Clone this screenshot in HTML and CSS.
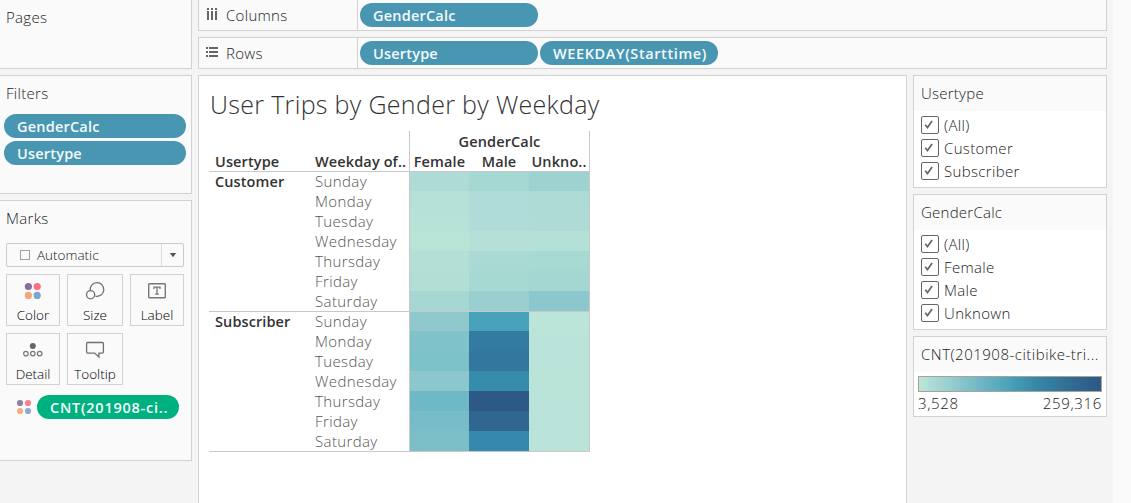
FILE: index.html
```
<!DOCTYPE html>
<html lang="en">
<head>
<meta charset="utf-8">
<title>User Trips by Gender by Weekday</title>
<link rel="stylesheet" href="styles.css">
</head>
<body>
<div class="app">
  <aside class="side">
    <section class="panel pages"><h2>Pages</h2></section>
    <section class="panel filters"><h2>Filters</h2>
      <div class="pill">GenderCalc</div>
      <div class="pill">Usertype</div>
    </section>
    <section class="panel marks"><h2>Marks</h2>
      <div class="select"><i class="square"></i><span class="t-auto">Automatic</span><b><svg width="8" height="5"><path d="M.8 0h6.4L4 4.2z" fill="#555"/></svg></b></div>
      <div class="buttons">
        <div class="btn"><svg width="20" height="20" viewBox="0 0 20 20"><circle cx="5.4" cy="5.5" r="3.6" fill="#84709b"/><circle cx="14.2" cy="5.5" r="3.6" fill="#fc7082"/><circle cx="5.4" cy="14.4" r="3.6" fill="#f4a67a"/><circle cx="14.2" cy="14.4" r="3.6" fill="#7fa5cd"/></svg><span>Color</span></div>
        <div class="btn"><svg width="20" height="20" viewBox="0 0 20 20" fill="none" stroke="#717171" stroke-width="1.3"><path d="M5.3 9.6a6.8 6.8 0 1 1 5.1 5.5"/><circle cx="5.6" cy="13.7" r="4.1"/></svg><span>Size</span></div>
        <div class="btn"><svg width="20" height="20" viewBox="0 0 20 20" fill="none" stroke="#777"><rect x="1.7" y="2.7" width="16.6" height="14" rx=".8" stroke-width="1.4"/><path d="M7 7.9V6.2h6v1.7M10 6.2v7M8.2 13.2h3.6" stroke-width="1.3"/></svg><span>Label</span></div>
        <div class="btn"><svg width="20" height="20" viewBox="0 0 20 20" fill="none" stroke="#777" stroke-width="1.2"><circle cx="9.8" cy="6" r="3" fill="#666" stroke="none"/><circle cx="2.9" cy="13.6" r="2.3"/><circle cx="9.8" cy="13.6" r="2.3"/><circle cx="16.7" cy="13.6" r="2.3"/></svg><span>Detail</span></div>
        <div class="btn"><svg width="20" height="20" viewBox="0 0 20 20" fill="none" stroke="#717171" stroke-width="1.3"><path d="M2.6 2.5h14.8q1 0 1 1v8.6q0 1-1 1h-3.5v3.9l-4.2-3.9H2.6q-1 0-1-1V3.5q0-1 1-1z"/></svg><span>Tooltip</span></div>
      </div>
      <div class="encoding"><svg width="16" height="16" viewBox="0 0 16 16"><circle cx="4" cy="4" r="3.1" fill="#917ea3"/><circle cx="12" cy="4" r="3.1" fill="#f9808f"/><circle cx="4" cy="12" r="3.1" fill="#f5ae85"/><circle cx="12" cy="12" r="3.1" fill="#8cabd0"/></svg><div class="pill measure">CNT(201908-ci..</div></div>
    </section>
  </aside>

  <main class="main">
    <div class="shelf columns"><div class="shelf-name"><svg width="12" height="12" fill="#666"><path d="M1 0h2v2H1zM5 0h2v2H5zM9 0h2v2H9zM1 3h2v9H1zM5 3h2v9H5zM9 3h2v9H9z"/></svg>Columns</div><div class="pill">GenderCalc</div></div>
    <div class="shelf rows"><div class="shelf-name"><svg width="12" height="12" fill="#666"><path d="M0 1h2v2H0zM0 5h2v2H0zM0 9h2v2H0zM3 1h9v2H3zM3 5h9v2H3zM3 9h9v2H3z"/></svg>Rows</div><div class="pill">Usertype</div><div class="pill weekday">WEEKDAY(Starttime)</div></div>
    <div class="work">
      <section class="viz">
        <h1>User Trips by Gender by Weekday</h1>
        <div class="table">
          <div class="head">
            <div class="h-user">Usertype</div><div class="h-day">Weekday of..</div>
            <div class="h-gender"><div class="h-title">GenderCalc</div><div>Female</div><div>Male</div><div>Unkno..</div></div>
          </div>
          <div class="group">
            <div class="name">Customer</div>
            <div class="days"><div>Sunday</div><div>Monday</div><div>Tuesday</div><div>Wednesday</div><div>Thursday</div><div>Friday</div><div>Saturday</div></div>
            <div class="heat">
              <i style="background:#afdbd6"></i><i style="background:#a5d8d3"></i><i style="background:#9cd3d0"></i>
              <i style="background:#b5e1d7"></i><i style="background:#afdcd8"></i><i style="background:#acdad5"></i>
              <i style="background:#b6e2d7"></i><i style="background:#afdcd8"></i><i style="background:#aedbd6"></i>
              <i style="background:#b8e4d7"></i><i style="background:#b4e0d7"></i><i style="background:#b4e0d7"></i>
              <i style="background:#b3dfd6"></i><i style="background:#abd9d4"></i><i style="background:#a8dad4"></i>
              <i style="background:#b2ded5"></i><i style="background:#a7d9d3"></i><i style="background:#a4d7d2"></i>
              <i style="background:#a5d8d3"></i><i style="background:#99d0cf"></i><i style="background:#8bc7cc"></i>
            </div>
          </div>
          <div class="group">
            <div class="name">Subscriber</div>
            <div class="days"><div>Sunday</div><div>Monday</div><div>Tuesday</div><div>Wednesday</div><div>Thursday</div><div>Friday</div><div>Saturday</div></div>
            <div class="heat">
              <i style="background:#8fc9cd"></i><i style="background:#47a2ba"></i><i style="background:#bce5da"></i>
              <i style="background:#80c2ca"></i><i style="background:#347ba1"></i><i style="background:#bae4d9"></i>
              <i style="background:#7ec2c9"></i><i style="background:#33779e"></i><i style="background:#bae4d9"></i>
              <i style="background:#8cc7ce"></i><i style="background:#378bab"></i><i style="background:#bbe4d9"></i>
              <i style="background:#6fb8c6"></i><i style="background:#2c5985"></i><i style="background:#b9e3d8"></i>
              <i style="background:#77bcc6"></i><i style="background:#306790"></i><i style="background:#b9e3d8"></i>
              <i style="background:#7cbfc9"></i><i style="background:#3688ae"></i><i style="background:#bae4d9"></i>
            </div>
          </div>
        </div>
      </section>
      <aside class="cards">
        <section class="card user"><h3>Usertype</h3>
          <label><svg class="check" viewBox="0 0 16 16"><path d="M3.2 7.7l2.3 2.8 4.6-6.4"/></svg><span>(All)</span></label>
          <label><svg class="check" viewBox="0 0 16 16"><path d="M3.2 7.7l2.3 2.8 4.6-6.4"/></svg><span>Customer</span></label>
          <label><svg class="check" viewBox="0 0 16 16"><path d="M3.2 7.7l2.3 2.8 4.6-6.4"/></svg><span>Subscriber</span></label>
        </section>
        <section class="card gender"><h3>GenderCalc</h3>
          <label><svg class="check" viewBox="0 0 16 16"><path d="M3.2 7.7l2.3 2.8 4.6-6.4"/></svg><span>(All)</span></label>
          <label><svg class="check" viewBox="0 0 16 16"><path d="M3.2 7.7l2.3 2.8 4.6-6.4"/></svg><span>Female</span></label>
          <label><svg class="check" viewBox="0 0 16 16"><path d="M3.2 7.7l2.3 2.8 4.6-6.4"/></svg><span>Male</span></label>
          <label><svg class="check" viewBox="0 0 16 16"><path d="M3.2 7.7l2.3 2.8 4.6-6.4"/></svg><span>Unknown</span></label>
        </section>
        <section class="card legend"><h3>CNT(201908-citibike-tri...</h3>
          <div class="ramp"></div>
          <div class="range"><span>3,528</span><span>259,316</span></div>
        </section>
      </aside>
    </div>
  </main>
  <div class="gutter"></div>
</div>
</body>
</html>
```
FILE: styles.css
```
* { box-sizing: border-box; }
body { margin: 0; font: 300 15px/20px "Open Sans", "Noto Sans", sans-serif; color: #222; overflow: hidden; }
h1, h2, h3 { margin: 0; font-weight: 300; font-size: 15px; line-height: 20px; }
h2 { letter-spacing: .3px; }
i { display: block; }
.app { display: flex; width: 1131px; height: 503px; background: #f4f4f4; overflow: hidden; }

.side { width: 192px; display: flex; flex-direction: column; gap: 6px; flex: none; }
.panel { background: #fafafa; border: 1px solid #d2d2d2; border-left: 0; padding-left: 6px; }
.pages { height: 69px; border-top: 0; padding-top: 7px; }
.filters { height: 119px; padding-top: 7px; }
.marks { height: 261px; padding-top: 7px; }

.pill { height: 24px; width: 178px; border-radius: 12px; background: #4996b2; color: #f4fafc; font-weight: 600; font-size: 14.5px; line-height: 25px; letter-spacing: .2px; padding-left: 13px; white-space: nowrap; flex: none; }
.filters .pill { width: 182px; margin: 0 0 3px -2px; }
.filters h2 { margin-bottom: 11px; }
.shelf .weekday { letter-spacing: .6px; }

.select { width: 178px; height: 24px; margin-top: 15px; border: 1px solid #cacaca; border-radius: 2px; display: flex; align-items: center; padding-left: 13px; font-size: 13.5px; }
.square { width: 10px; height: 10px; border: 1px solid #a0a0a0; margin-right: 7px; }
.select b { margin-left: auto; width: 22px; height: 22px; border-left: 1px solid #ddd; display: flex; align-items: center; justify-content: center; }
.buttons { display: grid; grid-template-columns: 54px 56px 54px; grid-auto-rows: 52px; gap: 7px; margin-top: 7px; }
.btn { border: 1px solid #d2d2d2; display: flex; flex-direction: column; align-items: center; padding-top: 6px; font-size: 13.5px; line-height: 18px; color: #000; }
.btn span { margin-top: 5px; }
.encoding { display: flex; align-items: center; gap: 5px; padding-left: 10px; margin-top: 10px; }
.measure { width: 142px; background: #00b180; letter-spacing: .75px; line-height: 26px; }

.main { width: 909px; margin-left: 6px; flex: none; }
.shelf { border: 1px solid #d2d2d2; background: #fafafa; display: flex; gap: 2px; }
.columns { height: 31px; border-top: 0; padding-top: 3px; }
.rows { height: 32px; margin-top: 6px; padding-top: 3px; }
.shelf-name { width: 159px; border-right: 1px solid #d2d2d2; display: flex; align-items: center; gap: 8px; padding-left: 7px; margin-top: -3px; letter-spacing: .3px; flex: none; }
.shelf-name svg { margin-top: -2px; }
.work { display: flex; gap: 6px; margin-top: 6px; }

.viz { width: 709px; height: 440px; background: #fff; border: 1px solid #d2d2d2; padding: 10px 0 0 10px; flex: none; }
h1 { font-size: 25px; line-height: 36px; padding-left: 1px; letter-spacing: .32px; white-space: nowrap; color: #333; }
.table { width: 381px; margin-top: 9px; border-bottom: 1px solid #c8c8c8; }
.head { display: flex; height: 40px; font-weight: 600; font-size: 14.5px; color: #333; white-space: nowrap; letter-spacing: .12px; }
.h-user, .h-day { width: 100px; padding: 21px 0 0 6px; }
.h-gender { width: 181px; padding-top: 1px; border: solid #c8c8c8; border-width: 0 1px; display: grid; grid-template-columns: 59px 60px 60px; grid-template-rows: 20px 19px; text-align: center; }
.h-title { grid-column: 1 / 4; }
.group { height: 140px; border-top: 1px solid #c8c8c8; display: grid; grid-template-columns: 100px 100px 181px; }
.name { font-weight: 600; font-size: 14.5px; padding-left: 6px; color: #333; letter-spacing: .1px; }
.days { padding-left: 6px; margin-top: -1px; color: #555; letter-spacing: .38px; }
.heat { border: solid #c8c8c8; border-width: 0 1px; display: grid; grid-template-columns: 59px 60px 60px; grid-template-rows: 19px repeat(6, 20px); }

.cards { width: 194px; display: flex; flex-direction: column; gap: 6px; }
.card { background: #fff; border: 1px solid #d2d2d2; white-space: nowrap; }
.card h3 { height: 35px; padding: 7px 0 0 7px; background: #fafafa; margin-bottom: 3px; letter-spacing: .25px; }
.user { height: 113px; }
.gender { height: 136px; }
.legend { height: 81px; }
.card.legend h3 { letter-spacing: .5px; }
.card label { display: flex; align-items: center; height: 23px; padding-left: 7px; gap: 5px; letter-spacing: .35px; }
.card label span { margin-top: -2px; }
.check { width: 18px; height: 18px; border: 1px solid #666; border-radius: 2px; fill: none; stroke: #666; stroke-width: 1.7; margin-top: -1px; }
.ramp { margin: 4px 4px 0; height: 16px; border: 1px solid #aaa296; background: linear-gradient(90deg, #bce5da, #8bc7cc 22%, #47a2ba 50%, #378bab 62%, #306790 87%, #2c5985); }
.range { display: flex; justify-content: space-between; padding: 1px 4px; letter-spacing: .65px; }
.gutter { margin-left: 6px; flex: 1; background: #fafafa; }
```
